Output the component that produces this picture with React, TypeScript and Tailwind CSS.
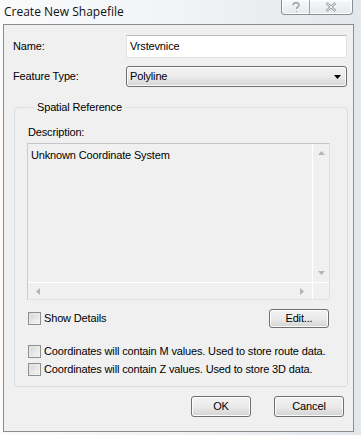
import type React from 'react'

const Checkbox: React.FC = () => (
  <span className="block h-[13px] w-[13px] shrink-0 border border-[#8e8f8f] bg-gradient-to-br from-[#dcdcdc] to-[#fbfbfb] p-[1px]">
    <span className="block h-full w-full border border-[#e6e6e6] bg-gradient-to-br from-[#d7d7d7] to-[#f6f6f6]" />
  </span>
)

type BtnProps = { label: string; className?: string }

const Button: React.FC<BtnProps> = ({ label, className = '' }) => (
  <button
    className={`flex items-center justify-center rounded-[3px] border border-[#707070] bg-gradient-to-b from-[#f2f2f2] via-[#ebebeb] to-[#d3d3d3] text-black shadow-[inset_0_0_0_1px_#fcfcfc] ${className}`}
  >
    {label}
  </button>
)

const Arrow: React.FC<{ dir: 'up' | 'down' | 'left' | 'right' }> = ({ dir }) => {
  const pts = {
    up: '0,4 7,4 3.5,0',
    down: '0,0 7,0 3.5,4',
    left: '4,0 4,7 0,3.5',
    right: '0,0 0,7 4,3.5',
  }[dir]
  const vertical = dir === 'up' || dir === 'down'
  return (
    <svg width={vertical ? 7 : 4} height={vertical ? 4 : 7} viewBox={vertical ? '0 0 7 4' : '0 0 4 7'}>
      <polygon points={pts} fill="#b4b4b4" />
    </svg>
  )
}

export default function App() {
  return (
    <div className="h-[435px] w-[361px] bg-gradient-to-r from-[#fbfbfc] via-[#f1f3f5] to-[#e3e7eb] font-['Liberation_Sans',Arial,sans-serif] text-[11px] leading-[13px] tracking-[-0.15px] text-black">
      {/* title bar */}
      <div className="flex h-[24px] items-start justify-between">
        <div className="mt-[4px] pl-[4px] font-['Open_Sans',sans-serif] text-[12px] leading-[16px] tracking-normal text-[#111]">
          Create New Shapefile
        </div>
        <div className="mr-[8px] flex h-[15px] rounded-b-[4px] border border-t-0 border-[#8b8f94] bg-gradient-to-b from-[#f7f8f9] to-[#e6e9ec] shadow-[inset_0_0_0_1px_#fdfdfd]">
          <div className="flex w-[28px] items-center justify-center border-r border-[#9fa3a8]">
            <svg width="8" height="11" viewBox="0 0 8 11">
              <path
                d="M1 3.2 C1 1.5 2.3 0.8 4 0.8 C5.8 0.8 7 1.7 7 3.2 C7 4.7 5.2 5 4.6 5.8 L4.6 7 M4.6 9.2 L4.6 10"
                fill="none"
                stroke="#9aa0a6"
                strokeWidth="1.4"
              />
            </svg>
          </div>
          <div className="flex w-[42px] items-center justify-center">
            <svg width="12" height="10" viewBox="0 0 12 10">
              <path d="M1.5 1 L10.5 9 M10.5 1 L1.5 9" stroke="#9aa0a6" strokeWidth="2.6" />
              <path d="M1.5 1 L10.5 9 M10.5 1 L1.5 9" stroke="#f4f5f6" strokeWidth="1" />
            </svg>
          </div>
        </div>
      </div>

      {/* client area */}
      <div className="ml-[3px] flex h-[408px] w-[351px] flex-col border border-[#8d8d8d] bg-[#f0f0f0]">
        <div className="mt-[10px] flex h-[23px] items-center">
          <span className="w-[122px] pl-[9px]">Name:</span>
          <div className="flex h-[23px] w-[221px] items-center border border-[#dfe3e8] border-t-[#b9bdc2] bg-white pl-[3px]">
            Vrstevnice
          </div>
        </div>

        <div className="mt-[8px] flex h-[21px] items-center">
          <span className="w-[122px] pl-[9px]">Feature Type:</span>
          <div className="flex h-[21px] w-[221px] items-center justify-between rounded-[3px] border border-[#707070] bg-gradient-to-b from-[#f2f2f2] via-[#ebebeb] to-[#d6d6d6] pl-[3px] pr-[5px] shadow-[inset_0_0_0_1px_#fbfbfb]">
            <span>Polyline</span>
            <svg width="7" height="4" viewBox="0 0 7 4">
              <polygon points="0,0 7,0 3.5,4" fill="#000" />
            </svg>
          </div>
        </div>

        <fieldset className="ml-[10px] mt-[13px] h-[287px] w-[334px] rounded-[3px] border border-[#d5dfe5] pl-[12px]">
          <legend className="ml-[7px] px-[3px] leading-[14px]">Spatial Reference</legend>

          <div className="mt-[12px] pl-[1px]">Description:</div>

          <div className="mt-[4px] flex h-[157px] w-[303px] flex-col border border-[#dde2e7] border-t-[#c2c5ca] border-l-[#c8cbd0] bg-[#f0f0f0]">
            <div className="flex flex-1">
              <div className="flex-1 pl-[3px] pt-[5px]">Unknown Coordinate System</div>
              <div className="flex w-[17px] flex-col items-center justify-between border-l border-white py-[7px]">
                <Arrow dir="up" />
                <Arrow dir="down" />
              </div>
            </div>
            <div className="flex h-[17px] border-t border-white">
              <div className="flex flex-1 items-center justify-between px-[8px]">
                <Arrow dir="left" />
                <Arrow dir="right" />
              </div>
              <div className="w-[17px] border-l border-white" />
            </div>
          </div>

          <div className="mt-[9px] flex h-[19px] w-[303px] items-center">
            <div className="ml-[1px] flex items-center gap-[3px]">
              <Checkbox />
              <span>Show Details</span>
            </div>
            <Button label="Edit..." className="ml-auto mr-[1px] h-[19px] w-[60px]" />
          </div>

          <div className="ml-[1px] mt-[17px] flex items-center gap-[3px]">
            <Checkbox />
            <span>Coordinates will contain M values. Used to store route data.</span>
          </div>
          <div className="ml-[1px] mt-[5px] flex items-center gap-[3px]">
            <Checkbox />
            <span>Coordinates will contain Z values. Used to store 3D data.</span>
          </div>
        </fieldset>

        <div className="mt-[9px] flex justify-end gap-[23px] pr-[9px]">
          <Button label="OK" className="h-[21px] w-[60px]" />
          <Button label="Cancel" className="h-[21px] w-[70px]" />
        </div>
      </div>
    </div>
  )
}
